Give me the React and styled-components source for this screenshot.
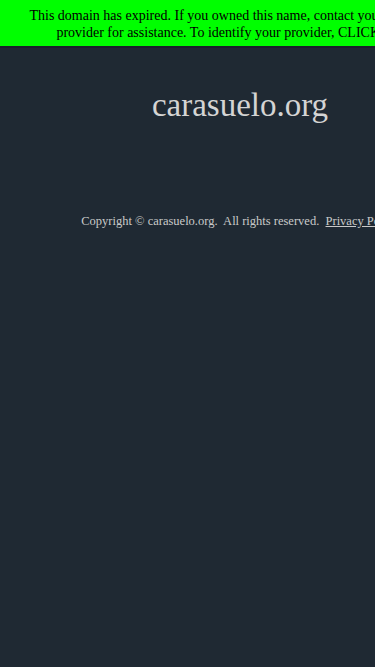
import React from "react";
import styled, { createGlobalStyle } from "styled-components";

const Global = createGlobalStyle`
  html, body { margin: 0; padding: 0; background: #1f2933; }
  body { font-family: "Liberation Serif", "Times New Roman", serif; }
`;

const Page = styled.div`
  width: 480px;
  min-height: 667px;
  background: #1f2933;
  display: flex;
  flex-direction: column;
`;

const Banner = styled.div`
  background: #00ff00;
  color: #000;
  font-size: 14px;
  line-height: 17px;
  text-align: center;
  white-space: nowrap;
  padding: 7px 0 5px;
  border-bottom: 2px solid #1a222b;
`;

const Click = styled.a`
  color: #000;
  text-decoration: none;
`;

const Title = styled.h1`
  margin: 37px 0 0;
  font-weight: normal;
  font-size: 33px;
  line-height: 40px;
  color: #d4d4d4;
  text-align: center;
`;

const Footer = styled.p`
  margin: 89px 0 0;
  font-size: 12.5px;
  color: #c9c9c9;
  text-align: center;
  white-space: pre;
`;

const Link = styled.a`
  color: #c9c9c9;
  text-decoration: underline;
`;

export default function App() {
  return (
    <>
      <Global />
      <Page>
        <Banner>
          This domain has expired. If you owned this name, contact your registration
          <br />
          provider for assistance. To identify your provider, <Click href="#">CLICK HERE.</Click>
        </Banner>
        <Title>carasuelo.org</Title>
        <Footer>
          {"Copyright © carasuelo.org.  All rights reserved.  "}
          <Link href="#">Privacy Policy</Link>
        </Footer>
      </Page>
    </>
  );
}
